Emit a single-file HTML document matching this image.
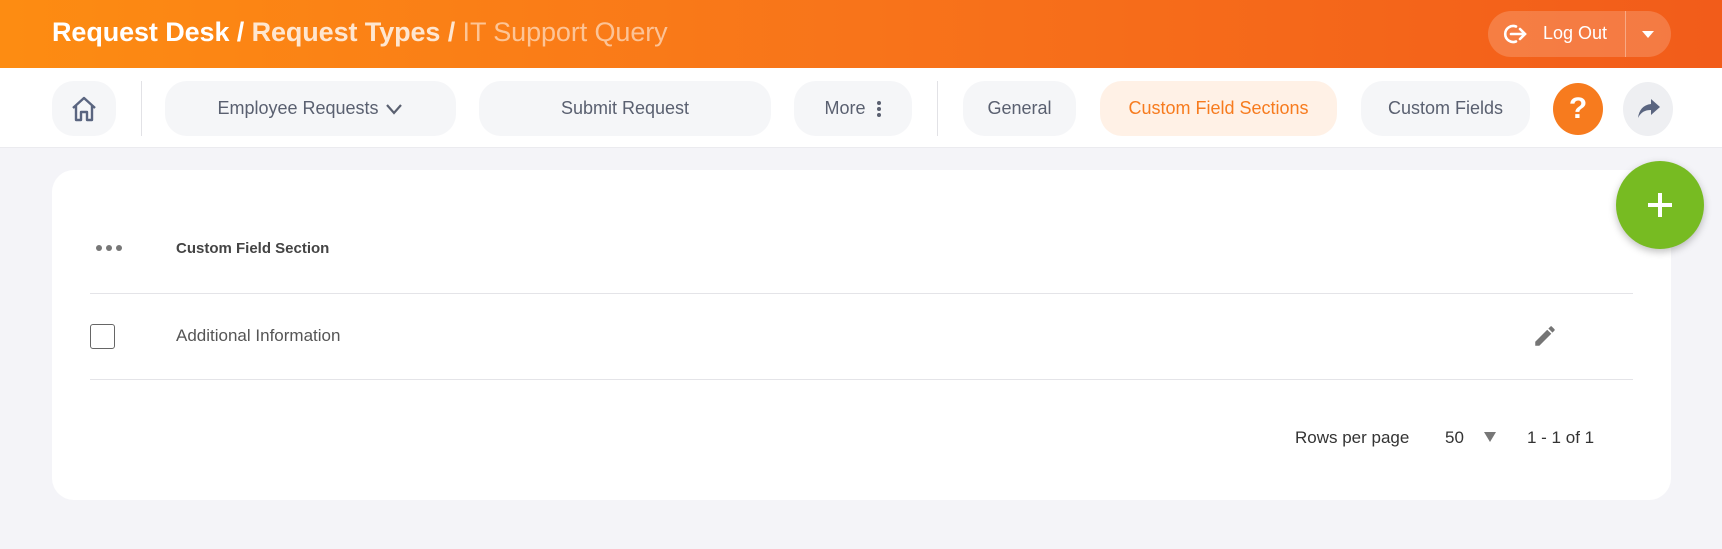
<!DOCTYPE html>
<html><head><style>
*{box-sizing:border-box;margin:0;padding:0}
body{width:1722px;height:549px;background:#f4f4f8;font-family:"Liberation Sans",sans-serif;position:relative;overflow:hidden}
.hdr{position:absolute;left:0;top:0;width:1722px;height:68px;background:linear-gradient(90deg,#fd8c12,#f8741a 50%,#f25c1a)}
.title{position:absolute;left:52px;top:17px;font-size:27px;color:#fff;font-weight:bold;letter-spacing:-0.1px}
.title .a{color:rgba(255,255,255,.8)}
.title .b{color:rgba(255,255,255,.55);font-weight:normal}
.logout{position:absolute;left:1488px;top:11px;width:183px;height:46px;border-radius:23px;background:rgba(255,255,255,.18);color:#fff;font-size:18px}
.nav{position:absolute;left:0;top:68px;width:1722px;height:80px;background:#fff;border-bottom:1px solid #ebebef}
.btn{position:absolute;top:13px;height:55px;border-radius:22px;background:#f5f6f8;color:#5a6070;font-size:18px;display:flex;align-items:center;justify-content:center}
.sep{position:absolute;top:13px;width:1px;height:55px;background:#e2e2e6}
.card{position:absolute;left:52px;top:170px;width:1619px;height:330px;background:#fff;border-radius:22px}
.t{position:absolute;color:#555}
</style></head><body>
<div class="hdr">
<div class="title">Request Desk / <span class="a">Request Types /</span> <span class="b">IT Support Query</span></div>
<div class="logout">
<svg style="position:absolute;left:14px;top:11px" width="26" height="24" viewBox="0 0 26 24" fill="none" stroke="#fff" stroke-width="2.6" stroke-linecap="round"><path d="M14 4.5A8 8 0 1 0 14 19.5"/><path d="M9 12H23M18 7l5 5-5 5"/></svg>
<span style="position:absolute;left:55px;top:12px">Log Out</span>
<div style="position:absolute;left:137px;top:0;width:1px;height:46px;background:rgba(255,255,255,.35)"></div>
<div style="position:absolute;left:154px;top:20px;border-left:6px solid transparent;border-right:6px solid transparent;border-top:7px solid #fff"></div>
</div>
</div>
<div class="nav">
<div class="btn" style="left:52px;width:64px">
<svg width="30" height="30" viewBox="0 0 30 30" fill="none" stroke="#5a6580" stroke-width="2.4" stroke-linejoin="round"><path d="M4 14L15 4 26 14M7 12V26H12V18H18V26H23V12"/></svg></div>
<div class="sep" style="left:141px"></div>
<div class="btn" style="left:165px;width:291px">Employee Requests&nbsp;<svg width="20" height="14" viewBox="0 0 20 14" fill="none" stroke="#5a6070" stroke-width="2.2"><path d="M3 3l7 8 7-8"/></svg></div>
<div class="btn" style="left:479px;width:292px">Submit Request</div>
<div class="btn" style="left:794px;width:118px">More&nbsp;&nbsp;<svg width="6" height="18"><circle cx="3" cy="3" r="2" fill="#5a6070"/><circle cx="3" cy="9" r="2" fill="#5a6070"/><circle cx="3" cy="15" r="2" fill="#5a6070"/></svg></div>
<div class="sep" style="left:937px"></div>
<div class="btn" style="left:963px;width:113px">General</div>
<div class="btn" style="left:1100px;width:237px;background:#fff1e6;color:#f77b1e">Custom Field Sections</div>
<div class="btn" style="left:1361px;width:169px">Custom Fields</div>
<div style="position:absolute;left:1553px;top:15px;width:50px;height:52px;border-radius:50%;background:#f77b1e;color:#fff;font-size:30px;font-weight:bold;text-align:center;line-height:52px">?</div>
<div style="position:absolute;left:1623px;top:14px;width:50px;height:54px;border-radius:50%;background:#eeeff2">
<svg style="position:absolute;left:13px;top:15px" width="26" height="24" viewBox="0 0 26 24"><path d="M15 2L24 10 15 18V13C9 13 5 15 2 21 3 13 7 8 15 7Z" fill="#5a6580"/></svg></div>
</div>
<div class="card">
<svg style="position:absolute;left:43px;top:74px" width="28" height="8"><circle cx="4" cy="4" r="3" fill="#777"/><circle cx="14" cy="4" r="3" fill="#777"/><circle cx="24" cy="4" r="3" fill="#777"/></svg>
<div class="t" style="left:124px;top:70px;font-size:15px;font-weight:bold;color:#444">Custom Field Section</div>
<div style="position:absolute;left:38px;top:123px;width:1543px;height:1px;background:#e4e4e8"></div>
<div style="position:absolute;left:38px;top:154px;width:25px;height:25px;border:1.5px solid #666;border-radius:3px"></div>
<div class="t" style="left:124px;top:156px;font-size:17px">Additional Information</div>
<svg style="position:absolute;left:1480px;top:153px" width="26" height="26" viewBox="0 0 24 24"><path d="M3 17.25V21h3.75L17.8 9.94l-3.75-3.75L3 17.25zM20.7 7.04a1 1 0 0 0 0-1.41l-2.34-2.34a1 1 0 0 0-1.41 0l-1.830 1.83 3.75 3.75 1.83-1.83z" fill="#757575"/></svg>
<div style="position:absolute;left:38px;top:209px;width:1543px;height:1px;background:#e4e4e8"></div>
<div class="t" style="left:1243px;top:258px;font-size:17px;color:#333">Rows per page</div>
<div class="t" style="left:1393px;top:258px;font-size:17px;color:#333">50</div>
<div style="position:absolute;left:1432px;top:262px;border-left:6px solid transparent;border-right:6px solid transparent;border-top:10px solid #777"></div>
<div class="t" style="left:1475px;top:258px;font-size:17px;color:#333">1 - 1 of 1</div>
</div>
<div style="position:absolute;left:1616px;top:161px;width:88px;height:88px;border-radius:50%;background:#77bb22;box-shadow:0 3px 8px rgba(0,0,0,.25)">
<svg style="position:absolute;left:30px;top:30px" width="28" height="28"><path d="M14 2V26M2 14H26" stroke="#fff" stroke-width="4"/></svg></div>
</body></html>
